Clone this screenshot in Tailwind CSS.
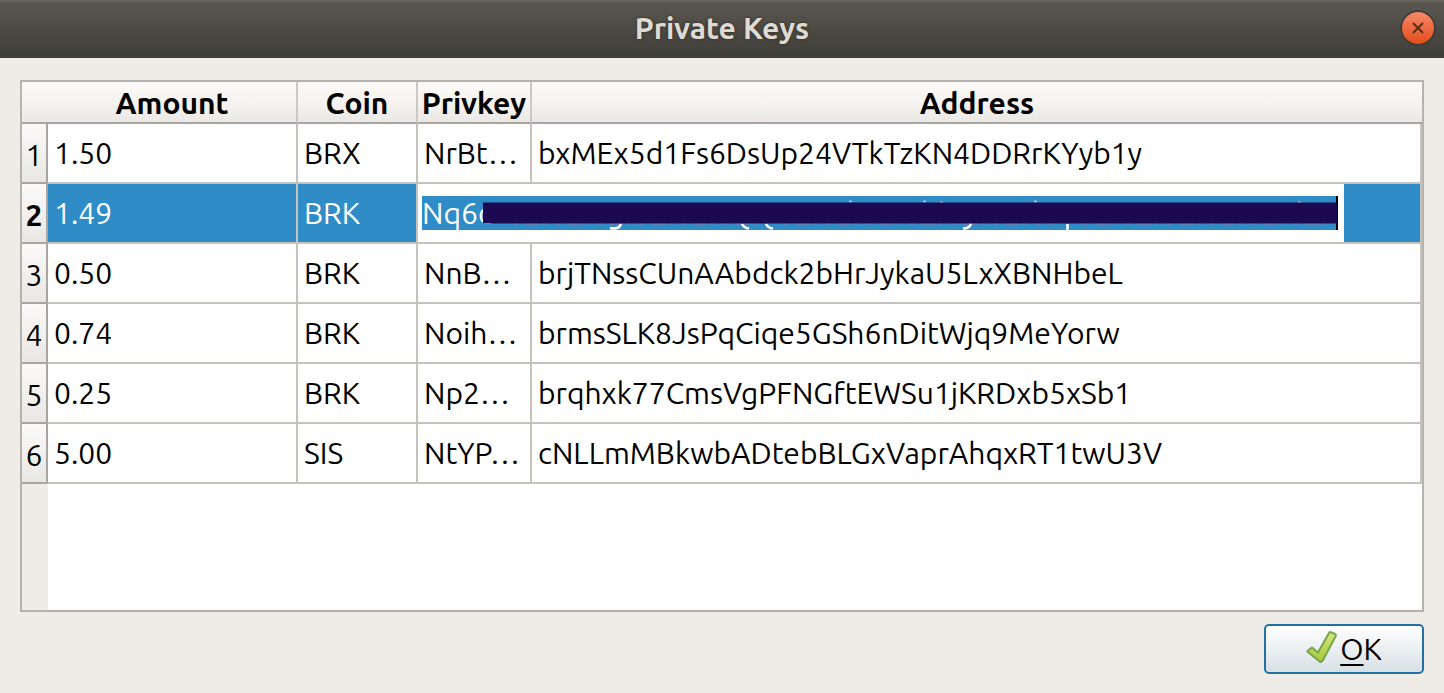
<!DOCTYPE html>
<html lang="en">
<head>
  <meta charset="UTF-8" />
  <meta name="viewport" content="width=device-width, initial-scale=1.0"/>
  <title>Private Keys</title>
  <script src="https://cdn.jsdelivr.net/npm/@tailwindcss/browser@4"></script>
</head>
<body class="h-screen flex flex-col overflow-hidden bg-[#efebe7] text-black font-['Ubuntu','Noto_Sans',sans-serif] text-[30px] leading-8">

  <!-- TITLE BAR -->
  <header class="relative h-[58px] shrink-0 flex items-center justify-center border-t-2 border-[#66635a] bg-linear-to-b from-[#5a574f] to-[#3e3d38]">
    <h1 class="pb-1 font-bold text-[#dfdbd2] [text-shadow:0_0_3px_#2b2a27]">Private Keys</h1>
    <button aria-label="Close" class="absolute right-2 top-2 size-9">
      <svg viewBox="0 0 36 36" class="size-9">
        <defs>
          <linearGradient id="closeFill" x1="0" y1="0" x2="0" y2="1">
            <stop offset="0" stop-color="#f58a6b"/>
            <stop offset=".5" stop-color="#ee6a43"/>
            <stop offset="1" stop-color="#e04c18"/>
          </linearGradient>
        </defs>
        <circle cx="18" cy="18" r="17.5" fill="#3b3935"/>
        <circle cx="18" cy="18" r="16" fill="url(#closeFill)"/>
        <path d="M13 13l10 10M23 13L13 23" stroke="#56300f" stroke-width="2"/>
      </svg>
    </button>
  </header>

  <main class="flex-1 min-h-0 flex flex-col px-5 pt-[22px] pb-[19px] gap-3">

    <!-- KEY TABLE -->
    <div class="flex-1 min-h-0 flex flex-col border-2 border-[#b6b2ae] bg-white">
      <table class="w-full table-fixed border-separate border-spacing-0 text-left whitespace-nowrap">
        <colgroup>
          <col class="w-[26px]"/>
          <col class="w-[250px]"/>
          <col class="w-[120px]"/>
          <col class="w-[114px]"/>
          <col/>
        </colgroup>
        <thead>
          <tr class="h-[42px] text-center bg-linear-to-b from-[#fcfaf8] via-[#f5f2ef] to-[#e9e7e4]">
            <td class="border-b-2 border-[#a9a5a1]"></td>
            <th scope="col" class="p-0 pt-0.5 border-b-2 border-r-2 border-b-[#a9a5a1] border-r-[#ccc8c4]">Amount</th>
            <th scope="col" class="p-0 pt-0.5 border-b-2 border-r-2 border-b-[#a9a5a1] border-r-[#ccc8c4]">Coin</th>
            <th scope="col" class="p-0 pt-0.5 border-b-2 border-r-2 border-b-[#a9a5a1] border-r-[#ccc8c4]">Privkey</th>
            <th scope="col" class="p-0 pt-0.5 border-b-2 border-[#a9a5a1]">Address</th>
          </tr>
        </thead>
        <tbody>
          <tr class="h-[60px]">
            <th scope="row" class="p-0 pt-1 text-center font-normal border-b-2 border-r-2 border-[#a9a5a1] bg-linear-to-b from-[#fcfaf8] to-[#e9e7e4]">1</th>
            <td class="px-1.5 border-b-2 border-r-2 border-[#c6c2be]">1.50</td>
            <td class="px-1.5 border-b-2 border-r-2 border-[#c6c2be]">BRX</td>
            <td class="px-1.5 border-b-2 border-r-2 border-[#c6c2be]">NrBt…</td>
            <td class="px-1.5 border-b-2 border-r-2 border-[#c6c2be]">bxMEx5d1Fs6DsUp24VTkTzKN4DDRrKYyb1y</td>
          </tr>
          <tr class="h-[60px]">
            <th scope="row" class="p-0 pt-1 text-center font-bold border-b-2 border-r-2 border-[#a9a5a1] bg-linear-to-b from-[#fcfaf8] to-[#e9e7e4]">2</th>
            <td class="px-1.5 border-b-2 border-r-2 border-[#c6c2be] bg-[#308cc6] text-white">1.49</td>
            <td class="px-1.5 border-b-2 border-r-2 border-[#c6c2be] bg-[#308cc6] text-white">BRK</td>
            <td colspan="2" class="p-0 border-b-2 border-r-2 border-[#c6c2be] bg-[#308cc6]">
              <!-- open cell editor, key masked after the first characters -->
              <div class="mr-[76px] h-[58px] flex items-center bg-white pl-1 pr-1.5">
                <div class="relative flex-1 h-[34px]">
                  <input type="text" aria-label="Privkey" value="Nq6c" class="block w-full h-[34px] p-0 border-r-2 border-black bg-[#308cc6] text-white outline-none"/>
                  <svg viewBox="0 0 855 34" preserveAspectRatio="none" class="absolute right-0 top-0 h-[34px] w-[calc(100%-61px)]">
                    <path d="M30 27.500h255M300 27.500h270M600 27.500h252" stroke="#8a78a8" stroke-width="2" stroke-dasharray="5 7 14 4 3 9"/>
                    <path d="M366 5.500h3M440 5.500h3M551 5.500h3M457 6.500h3M815 6.500h3" stroke="#b9bfd6" stroke-width="2"/>
                    <path d="M127 32q9 2 11-4M259 28q2 4 7 4.500M283 28q2 4 7 4.500M480 32.500q7 0 8-5M584.500 28v6" fill="none" stroke="#fff" stroke-width="2.500"/>
                    <rect y="6.500" width="854" height="21" fill="#1b0a52"/>
                  </svg>
                </div>
              </div>
            </td>
          </tr>
          <tr class="h-[60px]">
            <th scope="row" class="p-0 pt-1 text-center font-normal border-b-2 border-r-2 border-[#a9a5a1] bg-linear-to-b from-[#fcfaf8] to-[#e9e7e4]">3</th>
            <td class="px-1.5 border-b-2 border-r-2 border-[#c6c2be]">0.50</td>
            <td class="px-1.5 border-b-2 border-r-2 border-[#c6c2be]">BRK</td>
            <td class="px-1.5 border-b-2 border-r-2 border-[#c6c2be]">NnB…</td>
            <td class="px-1.5 border-b-2 border-r-2 border-[#c6c2be]">brjTNssCUnAAbdck2bHrJykaU5LxXBNHbeL</td>
          </tr>
          <tr class="h-[60px]">
            <th scope="row" class="p-0 pt-1 text-center font-normal border-b-2 border-r-2 border-[#a9a5a1] bg-linear-to-b from-[#fcfaf8] to-[#e9e7e4]">4</th>
            <td class="px-1.5 border-b-2 border-r-2 border-[#c6c2be]">0.74</td>
            <td class="px-1.5 border-b-2 border-r-2 border-[#c6c2be]">BRK</td>
            <td class="px-1.5 border-b-2 border-r-2 border-[#c6c2be]">Noih…</td>
            <td class="px-1.5 border-b-2 border-r-2 border-[#c6c2be]">brmsSLK8JsPqCiqe5GSh6nDitWjq9MeYorw</td>
          </tr>
          <tr class="h-[60px]">
            <th scope="row" class="p-0 pt-1 text-center font-normal border-b-2 border-r-2 border-[#a9a5a1] bg-linear-to-b from-[#fcfaf8] to-[#e9e7e4]">5</th>
            <td class="px-1.5 border-b-2 border-r-2 border-[#c6c2be]">0.25</td>
            <td class="px-1.5 border-b-2 border-r-2 border-[#c6c2be]">BRK</td>
            <td class="px-1.5 border-b-2 border-r-2 border-[#c6c2be]">Np2…</td>
            <td class="px-1.5 border-b-2 border-r-2 border-[#c6c2be]">brqhxk77CmsVgPFNGftEWSu1jKRDxb5xSb1</td>
          </tr>
          <tr class="h-[60px]">
            <th scope="row" class="p-0 pt-1 text-center font-normal border-b-2 border-r-2 border-[#a9a5a1] bg-linear-to-b from-[#fcfaf8] to-[#e9e7e4]">6</th>
            <td class="px-1.5 border-b-2 border-r-2 border-[#c6c2be]">5.00</td>
            <td class="px-1.5 border-b-2 border-r-2 border-[#c6c2be]">SIS</td>
            <td class="px-1.5 border-b-2 border-r-2 border-[#c6c2be]">NtYP…</td>
            <td class="px-1.5 border-b-2 border-r-2 border-[#c6c2be]">cNLLmMBkwbADtebBLGxVaprAhqxRT1twU3V</td>
          </tr>
        </tbody>
      </table>
      <!-- rest of the row header gutter -->
      <div class="flex-1 w-[26px] bg-[#efebe7]"></div>
    </div>

    <!-- DIALOG BUTTONS -->
    <div class="flex justify-end">
      <button class="w-40 h-[50px] flex items-center justify-center gap-0.5 rounded-[5px] border-2 border-[#2371a3] bg-linear-to-b from-white to-[#d8e0e5]">
        <svg viewBox="0 0 32 34" class="w-8 h-[34px] mb-1">
          <defs>
            <linearGradient id="tickFill" x1="0" y1="0" x2="0" y2="1">
              <stop offset="0" stop-color="#d6e67c"/>
              <stop offset="1" stop-color="#a6c735"/>
            </linearGradient>
          </defs>
          <path d="M2 20.500L6 17.500l6 5L23 3q1-1.500 2.500-.5L29 4q1.500 1 .5 2.500L16.500 31q-1.500 2-3.500 0L2 22q-1-.5 0-1.500z" fill="url(#tickFill)" stroke="#76a550" stroke-width="2" stroke-linejoin="round"/>
        </svg>
        <span><u class="underline decoration-2 underline-offset-4">O</u>K</span>
      </button>
    </div>
  </main>
</body>
</html>
